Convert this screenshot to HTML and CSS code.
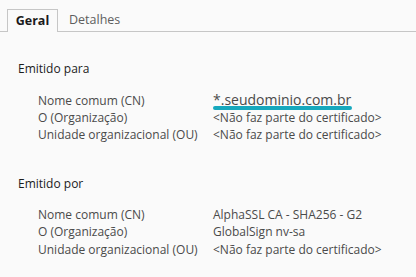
FILE: index.html
```html
<!DOCTYPE html>
<html lang="pt-BR">
<head>
    <meta charset="UTF-8">
    <title>Visualizador de certificado</title>
    <link rel="stylesheet" href="styles.css">
</head>
<body>
    <!-- Tabs -->
    <nav class="tabs">
        <div class="tab active">Geral</div>
        <div class="tab">Detalhes</div>
    </nav>

    <div class="panel">
        <!-- Issued to -->
        <section class="group">
            <h2 class="group-title">Emitido para</h2>
            <div class="fields">
                <div class="field">
                    <span class="field-label">Nome comum (CN)</span>
                    <span class="field-value domain">*.seudominio.com.br</span>
                </div>
                <div class="field">
                    <span class="field-label">O (Organização)</span>
                    <span class="field-value">&lt;Não faz parte do certificado&gt;</span>
                </div>
                <div class="field">
                    <span class="field-label">Unidade organizacional (OU)</span>
                    <span class="field-value">&lt;Não faz parte do certificado&gt;</span>
                </div>
            </div>
        </section>

        <!-- Issued by -->
        <section class="group">
            <h2 class="group-title">Emitido por</h2>
            <div class="fields">
                <div class="field">
                    <span class="field-label">Nome comum (CN)</span>
                    <span class="field-value">AlphaSSL CA - SHA256 - G2</span>
                </div>
                <div class="field">
                    <span class="field-label">O (Organização)</span>
                    <span class="field-value">GlobalSign nv-sa</span>
                </div>
                <div class="field">
                    <span class="field-label">Unidade organizacional (OU)</span>
                    <span class="field-value">&lt;Não faz parte do certificado&gt;</span>
                </div>
            </div>
        </section>
    </div>
</body>
</html>
```

FILE: styles.css
```css
body {
    margin: 0;
    background: #fafafa;
    font-family: 'Open Sans', 'Noto Sans', sans-serif;
    font-size: 12px;
    color: #4a4a4a;
}

/* Tabs */
.tabs {
    display: flex;
    padding: 9px 0 0 7px;
    border-bottom: 1px solid #c6c6c6;
}

.tab {
    height: 22px;
    line-height: 22px;
    padding: 0 11px;
    color: #5e5e5e;
    font-size: 12.5px;
}

.tab.active {
    width: 51px;
    box-sizing: border-box;
    padding: 0;
    text-align: center;
    color: #1a1a1a;
    font-weight: 700;
    border: 1px solid #c6c6c6;
    border-bottom: none;
    background: #fafafa;
    margin-bottom: -1px;
    height: 23px;
}

/* Groups */
.panel {
    padding: 28px 0 0 18px;
}

.group + .group {
    margin-top: 30.5px;
}

.group-title {
    margin: 0;
    font-size: 12px;
    font-weight: 400;
    line-height: 18px;
    color: #1c1c1c;
}

.fields {
    margin-top: 13px;
    padding-left: 20px;
}

.field {
    display: flex;
    align-items: baseline;
    height: 17.7px;
    line-height: 18px;
}

.field-label {
    width: 175px;
    flex-shrink: 0;
}

.field-value {
    white-space: nowrap;
}

/* Highlighted domain with marker underline */
.domain {
    position: relative;
    font-size: 14px;
}

.domain::after {
    content: '';
    position: absolute;
    left: 0;
    right: -1px;
    bottom: -1px;
    height: 4px;
    border-radius: 2px;
    background: #17a8bd;
}
```
